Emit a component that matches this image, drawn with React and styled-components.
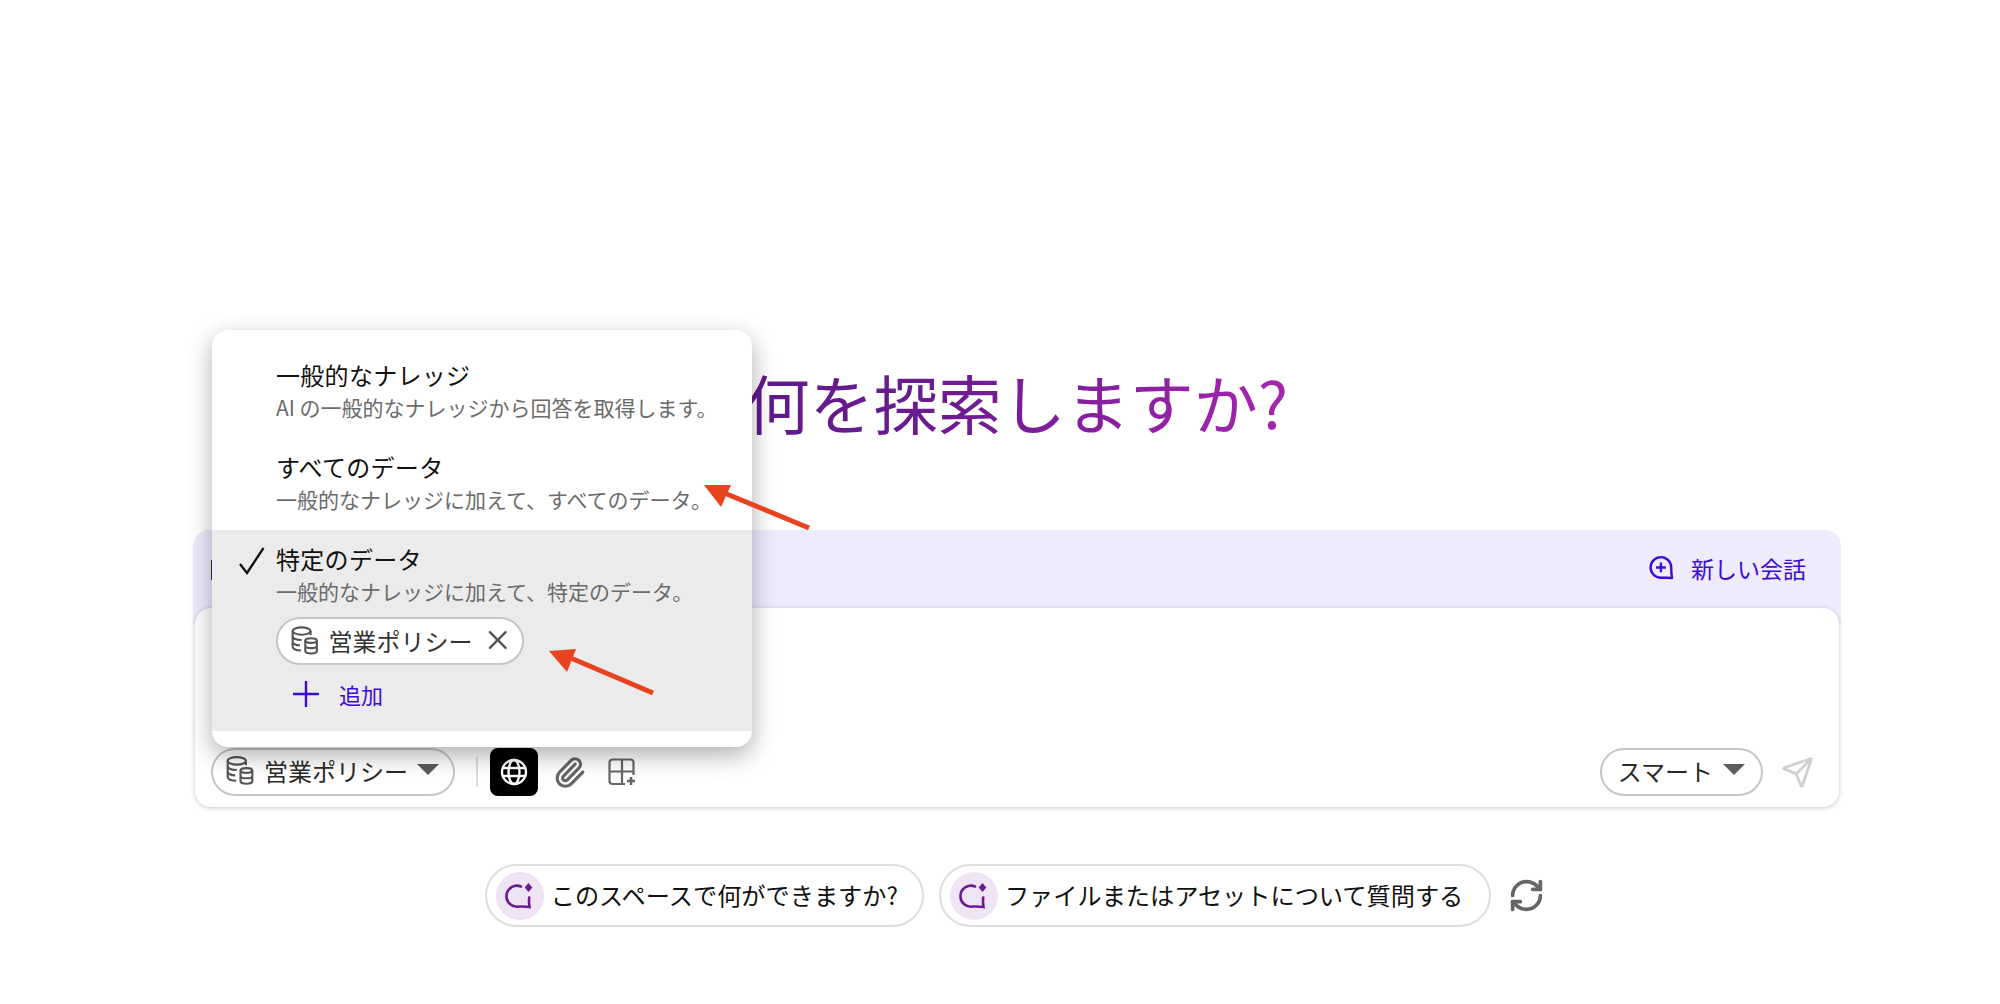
import React from "react";
import styled, { createGlobalStyle } from "styled-components";
import { Paperclip, Send, RefreshCw, X } from "lucide-react";

const Global = createGlobalStyle`
  html, body {
    margin: 0;
    background: #fff;
    font-family: "Noto Sans CJK JP", "Noto Sans", sans-serif;
    color: #1a1a1a;
  }
`;

const DbIcon = ({ size = 30 }) => (
  <svg width={size} height={size} viewBox="0 0 28 28" fill="none" stroke="#555" strokeWidth="2">
    <ellipse cx="11" cy="5.5" rx="8.5" ry="3.5" />
    <path d="M2.5 5.5v15c0 2 3.500 3.500 8 3.500M19.500 5.500v4M2.500 10.500c0 2 3.500 3.500 8.500 3.500M2.500 15.500c0 2 3 3.500 7 3.500" />
    <ellipse cx="20" cy="14.500" rx="5.500" ry="2.200" />
    <path d="M14.500 14.500v10c0 1.300 2.500 2.300 5.500 2.300s5.500-1 5.500-2.300v-10M14.500 19.500c0 1.300 2.500 2.200 5.500 2.200s5.500-.9 5.500-2.200" />
  </svg>
);

const GlobeIcon = () => (
  <svg width="28" height="28" viewBox="0 0 28 28" fill="none" stroke="#fff" strokeWidth="2.400">
    <circle cx="14" cy="14" r="12" />
    <ellipse cx="14" cy="14" rx="5.500" ry="12" />
    <path d="M3 10h22M3 18h22" />
  </svg>
);

const GridPlusIcon = () => (
  <svg width="30" height="30" viewBox="0 0 30 30" fill="none" stroke="#666" strokeWidth="2.200">
    <path d="M15 2.500H5.500a3 3 0 0 0-3 3V24a3 3 0 0 0 3 3H18M15 2.500V27M15 2.500h8.500a3 3 0 0 1 3 3V18M2.500 14.500h24" />
    <path d="M24 20v8M20 24h8" strokeWidth="2.600" />
  </svg>
);

const ChatPlusIcon = () => (
  <svg width="26" height="26" viewBox="0 0 24 24" fill="none" stroke="#3d0ad6" strokeWidth="2.200">
    <path d="M11 21a9.500 9.500 0 1 1 9.500-9.500c0 3 0 6 .8 9.700-3.800-.4-7.300-.2-10.300-.2z" strokeLinejoin="round" />
    <path d="M11 7v9M6.500 11.500h9" />
  </svg>
);

const SparkIcon = () => (
  <svg width="30" height="30" viewBox="0 0 30 30" fill="none" stroke="#6a1b8f" strokeWidth="2.600">
    <path d="M16 5.500A10.500 10.500 0 1 0 14 25.500c3.500 0 7-.2 10.500.5-.5-3-.6-6.500-.3-9.500" strokeLinecap="round" />
    <path d="M23.500 2l3.800 4.500-3.800 4.500-3.800-4.500z" fill="#6a1b8f" stroke="none" />
  </svg>
);

const CheckIcon = () => (
  <svg width="28" height="30" viewBox="0 0 28 30" fill="none" stroke="#111" strokeWidth="2.300">
    <path d="M2 18l7 9L25.500 2" />
  </svg>
);

const PlusIcon = () => (
  <svg width="28" height="28" viewBox="0 0 28 28" fill="none" stroke="currentColor" strokeWidth="2.400">
    <path d="M14 1v26M1 14h26" />
  </svg>
);

const Caret = styled.span`
  width: 0;
  height: 0;
  border-left: 11px solid transparent;
  border-right: 11px solid transparent;
  border-top: 11px solid #5c5c5c;
  margin-top: -1px;
`;

const Page = styled.div`
  position: relative;
  box-sizing: border-box;
  width: 2000px;
  height: 1004px;
  padding: 356px 159px 0 193px;
  overflow: hidden;
`;

const Title = styled.h1`
  margin: 0 auto 84px;
  height: 90px;
  line-height: 90px;
  text-align: center;
  font-size: 64px;
  font-weight: 400;
  color: transparent;
  background: linear-gradient(90deg, #5f1a8c 0%, #6a1b8f 35%, #a626b0 100%);
  background-clip: text;
  -webkit-background-clip: text;
  width: 550px;
  white-space: nowrap;
`;

const Panel = styled.section`
  position: relative;
  height: 277px;
  background: linear-gradient(#eeebfd 0 94px, transparent 94px);
  border-radius: 16px 16px 0 0;
  display: flex;
  flex-direction: column;
`;

const PanelHead = styled.div`
  box-sizing: border-box;
  height: 78px;
  flex: none;
  display: flex;
  align-items: center;
  justify-content: flex-end;
  padding: 0 35px 2px 0;
`;

const NewChat = styled.a`
  display: flex;
  align-items: center;
  gap: 16px;
  color: #3d0ad6;
  font-size: 23px;
  line-height: 30px;
`;

const Card = styled.div`
  flex: 1;
  margin: 0 2px;
  background: #fff;
  border-radius: 16px;
  box-shadow: 0 1px 5px rgba(0, 0, 0, 0.22);
  display: flex;
  align-items: flex-end;
  padding: 0 16px 11px;
`;

const Toolbar = styled.div`
  flex: 1;
  display: flex;
  align-items: center;
  gap: 12px;
`;

const Pill = styled.button`
  box-sizing: border-box;
  height: 48px;
  display: flex;
  align-items: center;
  gap: ${(p) => p.$gap || 9}px;
  padding: 0 ${(p) => p.$right || 14}px 4px ${(p) => p.$left || 12}px;
  background: #fff;
  border: 2px solid #c6c6c6;
  border-radius: 24px;
  font: inherit;
  font-size: 24px;
  color: #2a2a2a;
  white-space: nowrap;
`;

const Divider = styled.span`
  width: 2px;
  height: 30px;
  margin: 0 0 0 9px;
  background: #dcdcdc;
`;

const IconBtn = styled.span`
  width: 48px;
  height: 48px;
  display: flex;
  align-items: center;
  justify-content: center;
  border-radius: 8px;
  background: ${(p) => (p.$active ? "#000" : "transparent")};
  color: #666;
  margin: 0 ${(p) => p.$mr || 0}px 0 ${(p) => p.$ml || 0}px;
`;

const Spacer = styled.div`
  flex: 1;
`;

const Menu = styled.div`
  position: absolute;
  left: 19px;
  top: -200px;
  width: 540px;
  height: 417px;
  background: #fff;
  border-radius: 16px;
  box-shadow: 0 8px 24px rgba(0, 0, 0, 0.32);
  padding-top: 27px;
  box-sizing: border-box;
  z-index: 2;
`;

const Item = styled.div`
  position: relative;
  box-sizing: border-box;
  padding: ${(p) => p.$top || 0}px 0 0 64px;
  height: ${(p) => p.$h}px;
  background: ${(p) => (p.$selected ? "#ebebeb" : "transparent")};
`;

const ItemTitle = styled.div`
  font-size: 24px;
  line-height: 36px;
  color: #111;
  letter-spacing: 0.3px;
`;

const ItemSub = styled.div`
  margin-top: -2px;
  font-size: 21px;
  line-height: 33px;
  color: #6b6b6b;
  white-space: nowrap;
`;

const CheckMark = styled.span`
  position: absolute;
  left: 26px;
  top: 16px;
  display: flex;
`;

const Tag = styled(Pill)`
  height: 48px;
  margin-top: 9px;
  width: 248px;
  padding: 0 9px 2px 12px;
  justify-content: space-between;
  color: #333;
`;

const AddRow = styled.div`
  display: flex;
  align-items: center;
  gap: 19px;
  margin: 9px 0 0 16px;
  color: #3d0ad6;
  font-size: 22px;
  line-height: 40px;
`;

const Chips = styled.div`
  display: flex;
  align-items: center;
  justify-content: center;
  gap: 15px;
  margin: 57px 0 0 0;
  padding-right: 4px;
`;

const Chip = styled.button`
  box-sizing: border-box;
  height: 63px;
  display: flex;
  align-items: center;
  gap: 7px;
  padding: 0 ${(p) => p.$right}px 2px 9px;
  background: #fff;
  border: 2px solid #dedede;
  border-radius: 32px;
  font: inherit;
  font-size: 24.2px;
  color: #111;
  white-space: nowrap;
`;

const ChipIcon = styled.span`
  width: 48px;
  height: 48px;
  flex: none;
  margin-bottom: -2px;
  border-radius: 50%;
  background: #efe4f4;
  display: flex;
  align-items: center;
  justify-content: center;
`;

const Refresh = styled.span`
  display: flex;
  color: #666;
  margin-left: 2px;
`;

const ArrowMark = styled.svg`
  position: absolute;
  left: 0;
  top: 0;
  z-index: 3;
  pointer-events: none;
`;

const HiddenEdge = styled.span`
  position: absolute;
  left: 18px;
  top: 30px;
  width: 2px;
  height: 20px;
  background: #333;
`;

export default function App() {
  return (
    <Page>
      <Global />
      <Title>何を探索しますか?</Title>
      <Panel>
        <HiddenEdge />
        <PanelHead>
          <NewChat>
            <ChatPlusIcon />
            新しい会話
          </NewChat>
        </PanelHead>
        <Card>
          <Toolbar>
            <Pill>
              <DbIcon />
              営業ポリシー
              <Caret />
            </Pill>
            <Divider />
            <IconBtn $active>
              <GlobeIcon />
            </IconBtn>
            <IconBtn $ml={-5}>
              <Paperclip size={33} strokeWidth={2.300} />
            </IconBtn>
            <IconBtn $ml={-7}>
              <GridPlusIcon />
            </IconBtn>
            <Spacer />
            <Pill $left={16} $right={16} $gap={10}>
              スマート
              <Caret />
            </Pill>
            <IconBtn $ml={-2} $mr={2}>
              <Send size={33} strokeWidth={2} color="#cfcfcf" />
            </IconBtn>
          </Toolbar>
        </Card>
        <Menu>
          <Item $h={92}>
            <ItemTitle>一般的なナレッジ</ItemTitle>
            <ItemSub>AI の一般的なナレッジから回答を取得します。</ItemSub>
          </Item>
          <Item $h={81}>
            <ItemTitle>すべてのデータ</ItemTitle>
            <ItemSub>一般的なナレッジに加えて、すべてのデータ。</ItemSub>
          </Item>
          <Item $selected $h={201} $top={11}>
            <CheckMark>
              <CheckIcon />
            </CheckMark>
            <ItemTitle>特定のデータ</ItemTitle>
            <ItemSub>一般的なナレッジに加えて、特定のデータ。</ItemSub>
            <Tag>
              <DbIcon />
              営業ポリシー
              <X size={32} strokeWidth={1.800} color="#555" />
            </Tag>
            <AddRow>
              <PlusIcon />
              追加
            </AddRow>
          </Item>
        </Menu>
      </Panel>
      <Chips>
        <Chip $right={24}>
          <ChipIcon>
            <SparkIcon />
          </ChipIcon>
          このスペースで何ができますか?
        </Chip>
        <Chip $right={26}>
          <ChipIcon>
            <SparkIcon />
          </ChipIcon>
          ファイルまたはアセットについて質問する
        </Chip>
        <Refresh>
          <RefreshCw size={37} strokeWidth={2.400} />
        </Refresh>
      </Chips>
      <ArrowMark width="2000" height="1004" viewBox="0 0 2000 1004">
        <path d="M809 528L722 492" stroke="#e8431f" strokeWidth="5" />
        <path d="M704 485L731 485L721 507z" fill="#e8431f" />
        <path d="M653 693L566 656" stroke="#e8431f" strokeWidth="5" />
        <path d="M549 651L576 649L567 672z" fill="#e8431f" />
      </ArrowMark>
    </Page>
  );
}
